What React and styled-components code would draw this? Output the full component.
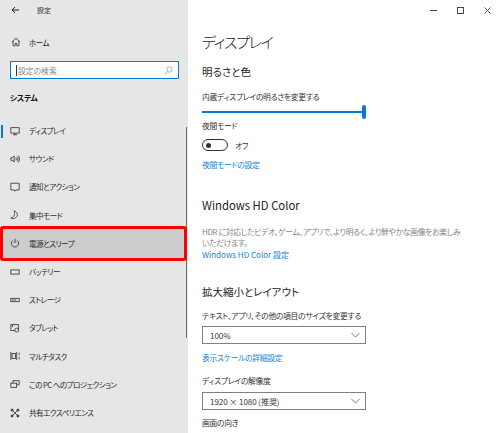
import React from "react";
import styled, { createGlobalStyle } from "styled-components";

const Global = createGlobalStyle`
  html, body { margin: 0; padding: 0; background: #fff; }
  body { font-family: "Noto Sans CJK JP", "Noto Sans", sans-serif; color: #1a1a1a; font-feature-settings: "palt"; }
`;
const Page = styled.div`
  width: 500px; height: 433px; display: flex; overflow: hidden; position: relative;
`;
const Sidebar = styled.aside`
  width: 188px; flex: none; background: #e6e6e6; display: flex; flex-direction: column; position: relative;
`;
const TitleBar = styled.div`
  height: 20px; display: flex; align-items: center; padding-left: 11px; gap: 18px; font-size: 7px; color: #333;
`;
const HomeRow = styled.div`
  margin-top: 12px; height: 20px; display: flex; align-items: center; padding-left: 11px; gap: 8px; font-size: 7.6px; letter-spacing: -0.6px; color: #222;
`;
const SearchBox = styled.div`
  margin: 9px 0 0 10px; width: 169px; height: 18px; box-sizing: border-box; border: 1.5px solid #0a78d7; background: #fff;
  display: flex; align-items: center; justify-content: space-between; padding: 0 5px 0 5px; font-size: 7.8px; color: #8a8a8a;
`;
const SearchLabel = styled.span`
  border-left: 1px solid #333; padding-left: 1px; line-height: 11px;
`;
const GroupTitle = styled.div`
  margin: 10px 0 0 10px; height: 18px; line-height: 18px; font-size: 7.8px; letter-spacing: -0.3px; font-weight: 700; color: #111;
`;
const List = styled.div`
  margin-top: 9.5px; display: flex; flex-direction: column;
`;
const Row = styled.div`
  height: 28.2px; flex: none; display: flex; align-items: center; box-sizing: border-box; padding-left: 10px; gap: 9px;
  font-size: 7.6px; letter-spacing: -0.55px; color: #2a2a2a; position: relative;
  ${(p) => p.$selected && `
    margin: 0 3px 0 2px; padding-left: 8px; background: #cccccc; outline: 3px solid #f00; outline-offset: -1px; border-radius: 1px; height: 31px; margin-top: -1.4px; margin-bottom: -1.4px; z-index: 1;
  `}
  ${(p) => p.$active && `
    &::before { content: ""; position: absolute; left: 1px; top: 8px; width: 2px; height: 13px; background: #0a78d7; }
  `}
`;
const IconSlot = styled.span`
  width: 10px; height: 10px; flex: none; display: flex; align-items: center; justify-content: center;
`;
const Scrollbar = styled.div`
  position: absolute; left: 185.5px; top: 127px; width: 1.5px; height: 211px; background: #6f6f6f;
`;
const Main = styled.main`
  flex: 1; min-width: 0; padding-left: 14px; display: flex; flex-direction: column; position: relative; font-size: 7.8px; letter-spacing: -0.3px; color: #222;
`;
const WinButtons = styled.div`
  height: 20px; display: flex; justify-content: flex-end; align-items: center; gap: 20px; padding-right: 9px;
`;
const PageTitle = styled.h1`
  margin: 11px 0 0; font-size: 15px; letter-spacing: -1.3px; font-weight: 300; line-height: 22px; color: #1a1a1a;
`;
const SectionTitle = styled.h2`
  margin: ${(p) => p.$top}px 0 0; font-size: ${(p) => p.$size || 10.5}px; letter-spacing: 0; font-weight: 400; line-height: 16px; color: #222;
`;
const Label = styled.div`
  margin-top: ${(p) => p.$top}px; line-height: 12px; color: #333;
`;
const Slider = styled.div`
  margin-top: 2px; width: 164px; height: 14px; position: relative; display: flex; align-items: center;
`;
const SliderTrack = styled.div`
  width: 100%; height: 1.5px; background: #0a78d7;
`;
const SliderThumb = styled.div`
  position: absolute; right: 0; top: 0; width: 4px; height: 14px; border-radius: 2px; background: #0a78d7;
`;
const ToggleRow = styled.div`
  margin-top: 7px; height: 12px; display: flex; align-items: center; gap: 7px; color: #333;
`;
const Toggle = styled.div`
  width: 26px; height: 12px; box-sizing: border-box; border: 1.5px solid #333; border-radius: 6px; display: flex; align-items: center; padding-left: 3px;
`;
const Knob = styled.div`
  width: 5px; height: 5px; border-radius: 50%; background: #333;
`;
const LinkText = styled.div`
  margin-top: ${(p) => p.$top}px; line-height: 12px; color: #1582d8; ${(p) => p.$latin && "letter-spacing: 0; font-size: 8px;"}
`;
const Paragraph = styled.p`
  margin: 13px 0 0; width: 262px; line-height: 11px; color: #858585; font-size: 7.8px;
`;
const Select = styled.div`
  margin-top: ${(p) => p.$top}px; width: 164px; height: 18px; box-sizing: border-box; border: 1.2px solid #808080; display: flex; align-items: center;
  justify-content: space-between; padding: 0 5px 0 7px; color: #333; background: #fff; font-size: 8px; letter-spacing: -0.05px;
`;

const Ic = ({ children, w = 10 }) => (
  <svg width={w} height={w} viewBox="0 0 12 12" fill="none" stroke="#333" strokeWidth="1">{children}</svg>
);
const icons = {
  display: <Ic><rect x="1" y="2" width="10" height="6.5" /><path d="M6 8.5v2M3.5 10.5h5" /></Ic>,
  sound: <Ic><path d="M1 4.5h1.5L5 2.5v7L2.5 7.5H1zM7 4.5c.7 1 .7 2 0 3M8.5 3c1.3 2 1.3 4 0 6M10 2c1.8 2.5 1.8 5.5 0 8" /></Ic>,
  notify: <Ic><path d="M1 1.5h10v8H7L6 11 4.8 9.5H1z" /></Ic>,
  moon: <Ic><path d="M5 1c3 1 5 4 3 7-1.5 2.5-5 3-7 1.5C4 9.5 6.5 6 5 1z" /></Ic>,
  power: <Ic><path d="M3.5 3a4.3 4.3 0 1 0 5 0M6 1v5" /></Ic>,
  battery: <Ic><rect x="1" y="3.5" width="10" height="5" /></Ic>,
  storage: <Ic><rect x="1" y="4" width="10" height="4" /><path d="M2.5 6h5" /></Ic>,
  tablet: <Ic><rect x="1" y="2" width="9" height="7" /><circle cx="8" cy="8.5" r="2.3" fill="#e6e6e6" /><path d="M3 2v3" /></Ic>,
  multi: <Ic><path d="M1 1v10M8 1v10M11 2v3M11 7v3" /><rect x="2.5" y="3" width="4" height="6" /></Ic>,
  project: <Ic><rect x="1" y="5" width="7" height="5" /><path d="M3.5 5V2h7.5v5H8" /></Ic>,
  share: <Ic><path d="M2.5 2.5l7 7M9.5 2.5l-7 7" /><circle cx="2.5" cy="2.5" r="1.2" fill="#333" /><circle cx="9.5" cy="2.5" r="1.2" fill="#333" /><circle cx="2.5" cy="9.5" r="1.2" fill="#333" /><circle cx="9.5" cy="9.5" r="1.2" fill="#333" /></Ic>,
};
const items = [
  ["display", "ディスプレイ"], ["sound", "サウンド"], ["notify", "通知とアクション"], ["moon", "集中モード"],
  ["power", "電源とスリープ"], ["battery", "バッテリー"], ["storage", "ストレージ"], ["tablet", "タブレット"],
  ["multi", "マルチタスク"], ["project", "この PC へのプロジェクション"], ["share", "共有エクスペリエンス"],
];
const Chevron = () => (
  <svg width="9" height="6" viewBox="0 0 9 6" fill="none" stroke="#555" strokeWidth="0.8"><path d="M.5 1l4 4 4-4" /></svg>
);

export default function App() {
  return (
    <Page>
      <Global />
      <Sidebar>
        <TitleBar>
          <svg width="8" height="8" viewBox="0 0 8 8" fill="none" stroke="#222" strokeWidth="1"><path d="M8 4H1M4 1L1 4l3 3" /></svg>
          <span>設定</span>
        </TitleBar>
        <HomeRow>
          <Ic><path d="M1 6l5-4.5L11 6M2.5 5v5.5h2.5V7.5h2v3h2.5V5" /></Ic>
          <span>ホーム</span>
        </HomeRow>
        <SearchBox>
          <SearchLabel>設定の検索</SearchLabel>
          <svg width="9" height="9" viewBox="0 0 9 9" fill="none" stroke="#999" strokeWidth="0.8"><circle cx="5.5" cy="3.5" r="2.7" /><path d="M3.5 5.5L.7 8.3" /></svg>
        </SearchBox>
        <GroupTitle>システム</GroupTitle>
        <List>
          {items.map(([k, t], i) => (
            <Row key={k} $active={i === 0} $selected={i === 4}>
              <IconSlot>{icons[k]}</IconSlot>
              <span>{t}</span>
            </Row>
          ))}
        </List>
        <Scrollbar />
      </Sidebar>
      <Main>
        <WinButtons>
          <svg width="7" height="7" viewBox="0 0 7 7" stroke="#444" strokeWidth="1"><path d="M0 3.5h7" /></svg>
          <svg width="7" height="7" viewBox="0 0 7 7" fill="none" stroke="#444" strokeWidth="1"><rect x=".5" y=".5" width="6" height="6" /></svg>
          <svg width="7" height="7" viewBox="0 0 7 7" stroke="#444" strokeWidth="0.9"><path d="M.5.5l6 6M6.5.5l-6 6" /></svg>
        </WinButtons>
        <PageTitle>ディスプレイ</PageTitle>
        <SectionTitle $top={11}>明るさと色</SectionTitle>
        <Label $top={11}>内蔵ディスプレイの明るさを変更する</Label>
        <Slider><SliderTrack /><SliderThumb /></Slider>
        <Label $top={1}>夜間モード</Label>
        <ToggleRow><Toggle><Knob /></Toggle><span>オフ</span></ToggleRow>
        <LinkText $top={8}>夜間モードの設定</LinkText>
        <SectionTitle $top={26} $size={11.3}>Windows HD Color</SectionTitle>
        <Paragraph>HDR に対応したビデオ、ゲーム、アプリで、より明るく、より鮮やかな画像をお楽しみいただけます。</Paragraph>
        <LinkText $top={1} $latin>Windows HD Color 設定</LinkText>
        <SectionTitle $top={23}>拡大縮小とレイアウト</SectionTitle>
        <Label $top={10}>テキスト、アプリ、その他の項目のサイズを変更する</Label>
        <Select $top={4}>100%<Chevron /></Select>
        <LinkText $top={8}>表示スケールの詳細設定</LinkText>
        <Label $top={11}>ディスプレイの解像度</Label>
        <Select $top={5}>1920 × 1080 (推奨)<Chevron /></Select>
        <Label $top={7}>画面の向き</Label>
      </Main>
    </Page>
  );
}
